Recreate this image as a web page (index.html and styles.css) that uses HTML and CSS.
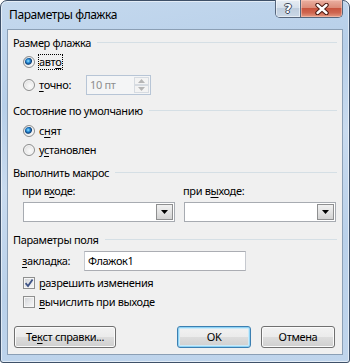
FILE: index.html
```html
<!DOCTYPE html>
<html lang="ru">
<head>
<meta charset="utf-8">
<title>Параметры флажка</title>
<link rel="stylesheet" href="styles.css">
</head>
<body>
<div class="window">
  <div class="titlebar">
    <div class="title">Параметры флажка</div>
    <div class="caption">
      <div class="cap-btn cap-help"><span class="q">?</span></div>
      <div class="cap-btn cap-close">
        <svg width="16" height="12" viewBox="0 0 16 12"><path d="M3.5 2 L12.5 10 M12.5 2 L3.5 10" stroke="#4b1a12" stroke-width="4.4" stroke-linecap="round"/><path d="M3.5 2 L12.5 10 M12.5 2 L3.5 10" stroke="#ffffff" stroke-width="2.4" stroke-linecap="round"/></svg>
      </div>
    </div>
  </div>
  <div class="client">
    <div class="ghead g1"><span>Размер флажка</span><i class="rule"></i></div>
    <div class="opt"><span class="radio checked"></span><span class="lbl focus">авт<u>о</u></span></div>
    <div class="opt opt-exact"><span class="radio"></span><span class="lbl lbl-exact"><u>т</u>очно:</span>
      <div class="spin"><span class="spin-val">10 пт</span><span class="spin-btns"><span class="sb"><svg width="7" height="4" viewBox="0 0 7 4"><path d="M0 4 L3.5 0 L7 4 Z" fill="#b5b5b5"/></svg></span><span class="sb"><svg width="7" height="4" viewBox="0 0 7 4"><path d="M0 0 L3.5 4 L7 0 Z" fill="#b5b5b5"/></svg></span></span></div>
    </div>

    <div class="ghead g2"><span>Состояние по умолчанию</span><i class="rule"></i></div>
    <div class="opt opt-s1"><span class="radio checked"></span><span class="lbl">с<u>н</u>ят</span></div>
    <div class="opt opt-s2"><span class="radio"></span><span class="lbl">у<u>с</u>тановлен</span></div>

    <div class="ghead g3"><span>Выполнить макрос</span><i class="rule"></i></div>
    <div class="macro">
      <div class="mcol">
        <div class="mlabel">при в<u>х</u>оде:</div>
        <div class="combo"><span class="dd"><svg width="7" height="4" viewBox="0 0 7 4"><path d="M0 0 L7 0 L3.5 4 Z" fill="#000"/></svg></span></div>
      </div>
      <div class="mcol">
        <div class="mlabel">при в<u>ы</u>ходе:</div>
        <div class="combo"><span class="dd"><svg width="7" height="4" viewBox="0 0 7 4"><path d="M0 0 L7 0 L3.5 4 Z" fill="#000"/></svg></span></div>
      </div>
    </div>

    <div class="ghead g4"><span>Параметры поля</span><i class="rule"></i></div>
    <div class="field"><span class="flabel"><u>з</u>акладка:</span><span class="input">Флажок1</span></div>
    <div class="opt opt-c1"><span class="chk"><svg width="10" height="10" viewBox="0 0 10 10"><path d="M1.6 5.2 L4 8 L8.6 1.4" fill="none" stroke="#3e5386" stroke-width="1.8"/></svg></span><span class="lbl"><u>р</u>азрешить изменения</span></div>
    <div class="opt opt-c2"><span class="chk"></span><span class="lbl"><u>в</u>ычислить при выходе</span></div>

    <div class="buttons">
      <div class="btn btn-help">Те<u>к</u>ст справки...</div>
      <div class="btn btn-ok">OK</div>
      <div class="btn btn-cancel">Отмена</div>
    </div>
  </div>
</div>
</body>
</html>
```
FILE: styles.css
```css
* { box-sizing: border-box; }
html, body { margin: 0; padding: 0; }
body {
  width: 350px;
  height: 363px;
  overflow: hidden;
  background: #ffffff;
  font-family: "Noto Sans", "Open Sans", sans-serif;
  font-size: 11px;
  letter-spacing: -0.35px;
  color: #000;
}
u { text-decoration: underline; text-underline-offset: 2px; }

.window {
  width: 350px;
  height: 363px;
  display: flex;
  flex-direction: column;
  padding: 0 6px 7px 6px;
  border: 1px solid #3e5068;
  border-radius: 7px 7px 3px 3px;
  background: linear-gradient(170deg, #c5d9ee 0%, #b7cfe9 25%, #c9dbef 45%, #bad1ea 70%, #c0d5ec 100%);
  box-shadow: inset 0 0 0 1px rgba(255, 255, 255, 0.55);
}

.titlebar {
  flex: none;
  height: 28px;
  display: flex;
  justify-content: space-between;
  align-items: flex-start;
}
.title {
  margin: 6px 0 0 2px;
  line-height: 16px;
  font-size: 12px;
  letter-spacing: -0.4px;
}
.caption {
  display: flex;
  height: 18px;
  margin-top: -1px;
  border: 1px solid #56667c;
  border-top: none;
  border-radius: 0 0 5px 5px;
  overflow: hidden;
}
.cap-btn {
  display: flex;
  align-items: center;
  justify-content: center;
}
.cap-help {
  width: 25px;
  border-right: 1px solid #56667c;
  background: linear-gradient(180deg, #e6ecf3 0%, #d6e0eb 45%, #bfcddd 50%, #cbd8e6 100%);
  box-shadow: inset 0 0 0 1px rgba(255,255,255,0.5);
}
.cap-help .q {
  font-family: "DejaVu Sans", sans-serif;
  font-weight: bold;
  font-size: 13px;
  letter-spacing: 0;
  line-height: 14px;
  color: #ffffff;
  text-shadow: 1px 0 0 #3b4758, -1px 0 0 #3b4758, 0 1px 0 #3b4758, 0 -1px 0 #3b4758;
}
.cap-close {
  width: 41px;
  background: linear-gradient(180deg, #eab0a2 0%, #dc8c79 45%, #c8553f 50%, #cf6650 75%, #e39a83 100%);
  box-shadow: inset 0 0 0 1px rgba(255,210,195,0.5);
}
.cap-close svg { display: block; }

.client {
  flex: 1;
  display: flex;
  flex-direction: column;
  background: #f0f0f0;
  border: 1px solid #8b9fb5;
}

/* group headings */
.ghead {
  flex: none;
  display: flex;
  align-items: center;
  height: 20px;
  padding: 0 5px 0 5px;
  line-height: 16px;
}
.ghead .rule {
  flex: 1;
  height: 1px;
  margin: -2px 0 0 6px;
  background: #d5dfe5;
}
.g1 { margin-top: 3px; }
.g2 { margin-top: 6px; }
.g3 { margin-top: 4px; }
.g4 { margin-top: 8px; }

/* option rows */
.opt {
  flex: none;
  display: flex;
  align-items: center;
  height: 18px;
  padding-left: 15px;
}
.opt-exact { height: 20px; margin-top: 4px; }
.opt-s1 { margin-top: 1px; }
.opt-s2 { margin-top: 1px; }
.opt-c1 { margin-top: 3px; }
.opt-c2 { margin-top: 1px; }

.lbl {
  display: inline-block;
  line-height: 14px;
  margin-left: 3px;
  padding-right: 1px;
  border: 1px dotted transparent;
}
.lbl.focus { border-color: #000; }
.lbl-exact { width: 48px; }

.radio {
  flex: none;
  width: 12px;
  height: 12px;
  border-radius: 50%;
  border: 1px solid #8d8e8e;
  background: radial-gradient(circle at 60% 60%, #fbfbfb 0, #ececec 45%, #d0d0d0 100%);
  box-shadow: inset 0 0 0 1px #f7f7f7;
}
.radio.checked {
  background:
    radial-gradient(circle at 42% 40%, #9fe6ff 0, #3aa0e4 1.4px, #1662a8 2.6px, #0c3f75 3.3px, #8aa2bb 3.8px, transparent 4.3px),
    radial-gradient(circle at 60% 60%, #fbfbfb 0, #ececec 45%, #d0d0d0 100%);
}

.chk {
  flex: none;
  width: 12px;
  height: 12px;
  border: 1px solid #8e8f8f;
  background: linear-gradient(135deg, #cfd2d6 0%, #e6e7e9 50%, #f8f8f8 100%);
  box-shadow: inset 0 0 0 1px #f6f6f6;
  display: flex;
  align-items: center;
  justify-content: center;
}
.chk svg { display: block; }

/* spin box */
.spin {
  flex: none;
  width: 65px;
  height: 20px;
  display: flex;
  align-items: center;
  justify-content: space-between;
  border: 1px solid #b7c5d6;
  background: #f4f5f6;
  padding: 1px 1px 1px 3px;
}
.spin-val { color: #8e8e8e; line-height: 16px; }
.spin-btns {
  display: flex;
  flex-direction: column;
  width: 15px;
  height: 16px;
}
.sb {
  flex: 1;
  display: flex;
  align-items: center;
  justify-content: center;
  border: 1px solid #d6dbe1;
  background: #f3f3f3;
}
.sb svg { display: block; }

/* macro combos */
.macro {
  flex: none;
  display: grid;
  grid-template-columns: 152px 152px;
  column-gap: 9px;
  padding-left: 15px;
}
.mlabel {
  height: 16px;
  line-height: 16px;
  margin-left: -1px;
}
.combo {
  margin-top: 3px;
  height: 20px;
  border: 1px solid #a7abb1;
  background: #ffffff;
  display: flex;
  justify-content: flex-end;
  padding: 1px;
}
.dd {
  width: 17px;
  height: 100%;
  display: flex;
  align-items: center;
  justify-content: center;
  border: 1px solid #8e8f90;
  background: linear-gradient(180deg, #f1f1f1 0%, #e3e3e3 50%, #d3d3d3 100%);
}
.dd svg { display: block; }

/* bookmark field */
.field {
  flex: none;
  display: flex;
  align-items: center;
  height: 20px;
  margin-top: 1px;
  padding-left: 14px;
}
.flabel { width: 62px; line-height: 16px; }
.input {
  width: 162px;
  height: 20px;
  border: 1px solid #abadb3;
  border-left-color: #c6c9cf;
  border-right-color: #c6c9cf;
  background: #ffffff;
  padding-left: 3px;
  line-height: 18px;
}

/* buttons */
.buttons {
  flex: none;
  display: flex;
  height: 22px;
  margin-top: 15px;
  padding: 0 7px 0 6px;
}
.btn {
  height: 22px;
  display: flex;
  align-items: center;
  justify-content: center;
  line-height: 16px;
  border: 1px solid #707070;
  border-radius: 3px;
  background: linear-gradient(180deg, #f2f2f2 0%, #ebebeb 50%, #dddddd 50%, #cfcfcf 100%);
  box-shadow: inset 0 0 0 1px #fbfbfb;
}
.btn-help { width: 102px; }
.btn-ok {
  width: 74px;
  margin-left: auto;
  border-color: #3c7fb1;
  box-shadow: inset 0 0 0 1px #8fd3f5, inset 0 0 0 2px #cdeaf8;
}
.btn-cancel { width: 74px; margin-left: 10px; }
```
